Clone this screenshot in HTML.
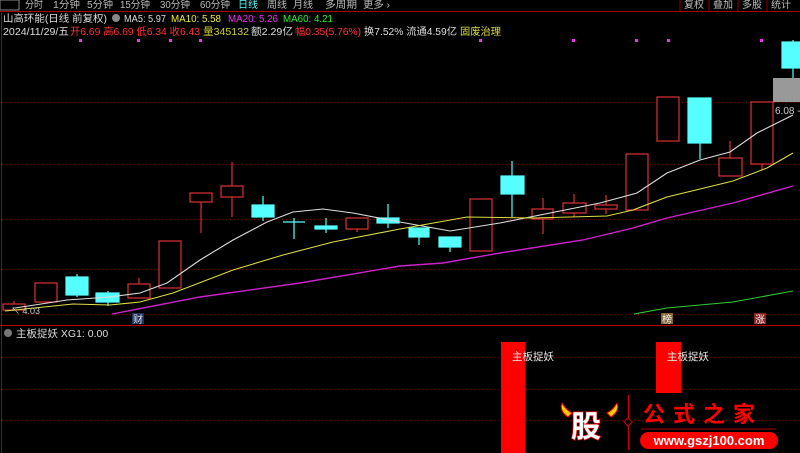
<!DOCTYPE html>
<html><head><meta charset="utf-8"><style>
html,body{margin:0;padding:0;background:#000;width:800px;height:453px;overflow:hidden}
svg{display:block}
text{font-family:"Liberation Sans","Noto Sans CJK SC",sans-serif}
</style></head><body>
<svg width="800" height="453" viewBox="0 0 800 453" xmlns="http://www.w3.org/2000/svg">
<rect width="800" height="453" fill="#000"/>
<!-- top bar -->
<rect x="0" y="0" width="19" height="10" fill="none" stroke="#888" stroke-width="1"/>
<g font-size="10" fill="#bbb" lengthAdjust="spacingAndGlyphs">
<text x="25" y="8" textLength="18" lengthAdjust="spacingAndGlyphs">分时</text>
<text x="53" y="8" textLength="27" lengthAdjust="spacingAndGlyphs">1分钟</text>
<text x="87" y="8" textLength="26" lengthAdjust="spacingAndGlyphs">5分钟</text>
<text x="120" y="8" textLength="30" lengthAdjust="spacingAndGlyphs">15分钟</text>
<text x="160" y="8" textLength="30" lengthAdjust="spacingAndGlyphs">30分钟</text>
<text x="200" y="8" textLength="30" lengthAdjust="spacingAndGlyphs">60分钟</text>
<text x="238" y="8" fill="#5ff" textLength="20" lengthAdjust="spacingAndGlyphs">日线</text>
<text x="267" y="8" textLength="20" lengthAdjust="spacingAndGlyphs">周线</text>
<text x="293" y="8" textLength="20" lengthAdjust="spacingAndGlyphs">月线</text>
<text x="325" y="8" textLength="32" lengthAdjust="spacingAndGlyphs">多周期</text>
<text x="363" y="8" textLength="27" lengthAdjust="spacingAndGlyphs">更多 ›</text>
<text x="684" y="8">复权</text><text x="713" y="8">叠加</text><text x="742" y="8">多股</text><text x="771" y="8">统计</text>
</g>
<g stroke="#8b0000" stroke-width="1"><line x1="680" y1="0" x2="680" y2="11"/><line x1="709" y1="0" x2="709" y2="11"/><line x1="738" y1="0" x2="738" y2="11"/><line x1="767" y1="0" x2="767" y2="11"/></g>
<line x1="0" y1="11.5" x2="800" y2="11.5" stroke="#a00" stroke-width="1"/>
<line x1="1.5" y1="12" x2="1.5" y2="453" stroke="#a00" stroke-width="1"/>
<!-- header -->
<g font-size="10">
<text x="3" y="22" fill="#ddd" textLength="104" lengthAdjust="spacingAndGlyphs">山高环能(日线 前复权)</text>
<circle cx="116" cy="18" r="4" fill="#888"/>
<text x="124" y="22" fill="#ddd" textLength="42" lengthAdjust="spacingAndGlyphs">MA5: 5.97</text>
<text x="171" y="22" fill="#ee3" textLength="50" lengthAdjust="spacingAndGlyphs">MA10: 5.58</text>
<text x="228" y="22" fill="#e3e" textLength="50" lengthAdjust="spacingAndGlyphs">MA20: 5.26</text>
<text x="283" y="22" fill="#3e3" textLength="50" lengthAdjust="spacingAndGlyphs">MA60: 4.21</text>
<text x="3" y="35" fill="#ddd" textLength="66" lengthAdjust="spacingAndGlyphs">2024/11/29/五</text>
<text x="70" y="35" fill="#f33" textLength="130" lengthAdjust="spacingAndGlyphs">开6.69 高6.69 低6.34 收6.43</text>
<text x="203" y="35" fill="#cc3" textLength="46" lengthAdjust="spacingAndGlyphs">量345132</text>
<text x="251" y="35" fill="#ddd" textLength="42" lengthAdjust="spacingAndGlyphs">额2.29亿</text>
<text x="295" y="35" fill="#f33" textLength="66" lengthAdjust="spacingAndGlyphs">幅0.35(5.76%)</text>
<text x="364" y="35" fill="#ddd" textLength="93" lengthAdjust="spacingAndGlyphs">换7.52% 流通4.59亿</text>
<text x="460" y="35" fill="#dd4" textLength="41" lengthAdjust="spacingAndGlyphs">固废治理</text>
</g>
<!-- pink dots -->
<g fill="#e3e"><rect x="79" y="39" width="3" height="3"/><rect x="137" y="39" width="3" height="3"/><rect x="169" y="39" width="3" height="3"/><rect x="199" y="39" width="3" height="3"/><rect x="479" y="39" width="3" height="3"/><rect x="572" y="39" width="3" height="3"/><rect x="635" y="39" width="3" height="3"/><rect x="667" y="39" width="3" height="3"/><rect x="760" y="39" width="3" height="3"/></g>
<!-- grid -->
<g stroke="#700" stroke-width="1" stroke-dasharray="1,3">
<line x1="2" y1="102.5" x2="800" y2="102.5"/><line x1="2" y1="164.5" x2="800" y2="164.5"/><line x1="2" y1="219.5" x2="800" y2="219.5"/><line x1="2" y1="269.5" x2="800" y2="269.5"/><line x1="2" y1="314.5" x2="800" y2="314.5"/>
<line x1="2" y1="357.5" x2="800" y2="357.5"/><line x1="2" y1="389.5" x2="800" y2="389.5"/><line x1="2" y1="420.5" x2="800" y2="420.5"/>
</g>
<!-- candles red -->
<g stroke="#d33" stroke-width="1.2" fill="#000">
<line x1="14" y1="301" x2="14" y2="304"/><rect x="3" y="304" width="22" height="6"/>
<rect x="35" y="283" width="22" height="19"/>
<line x1="139" y1="278" x2="139" y2="284"/><rect x="128" y="284" width="22" height="14"/>
<rect x="159" y="241" width="22" height="47"/>
<line x1="201" y1="202" x2="201" y2="233"/><rect x="190" y="193" width="22" height="9"/>
<line x1="232" y1="162" x2="232" y2="217"/><rect x="221" y="186" width="22" height="11"/>
<line x1="357" y1="229" x2="357" y2="232"/><rect x="346" y="218" width="22" height="11"/>
<rect x="470" y="199" width="22" height="52"/>
<line x1="543" y1="198" x2="543" y2="234"/><rect x="532" y="209" width="21" height="10"/>
<line x1="574" y1="194" x2="574" y2="217"/><rect x="563" y="203" width="23" height="10"/>
<line x1="606" y1="195" x2="606" y2="214"/><rect x="595" y="205" width="22" height="4"/>
<rect x="626" y="154" width="22" height="56"/>
<rect x="657" y="97" width="22" height="44"/>
<line x1="730" y1="141" x2="730" y2="158"/><rect x="719" y="158" width="23" height="18"/>
<line x1="762" y1="164" x2="762" y2="170"/><rect x="751" y="102" width="22" height="62"/>
</g>
<!-- candles cyan -->
<g stroke="#5ff" stroke-width="1.2" fill="#5ff">
<line x1="77" y1="274" x2="77" y2="297"/><rect x="66" y="277" width="22" height="18"/>
<line x1="108" y1="291" x2="108" y2="306"/><rect x="96" y="293" width="23" height="9"/>
<line x1="263" y1="196" x2="263" y2="221"/><rect x="252" y="205" width="22" height="12"/>
<line x1="294" y1="218" x2="294" y2="239"/><line x1="283" y1="222" x2="305" y2="222"/>
<line x1="326" y1="218" x2="326" y2="233"/><rect x="315" y="226" width="22" height="3"/>
<line x1="388" y1="204" x2="388" y2="228"/><rect x="377" y="218" width="22" height="5"/>
<line x1="419" y1="228" x2="419" y2="245"/><rect x="409" y="228" width="20" height="9"/>
<line x1="450" y1="237" x2="450" y2="252"/><rect x="439" y="237" width="22" height="10"/>
<line x1="512" y1="161" x2="512" y2="217"/><rect x="501" y="176" width="23" height="18"/>
<line x1="700" y1="98" x2="700" y2="159"/><rect x="688" y="98" width="23" height="45"/>
<line x1="793" y1="40" x2="793" y2="78"/><rect x="782" y="42" width="18" height="26"/>
</g>
<rect x="773" y="78" width="27" height="24" fill="#999"/>
<text x="775" y="114" font-size="10" fill="#ccc">6.08 -</text>
<!-- MAs -->
<g fill="none" stroke-width="1.1">
<polyline stroke="#ddd" points="15,308 67,300 110,297 140,293 167,283 200,260 233,240 267,222 293,212 323,209 353,213 400,222 450,231 500,223 600,203 637,193 667,173 700,160 730,152 757,133 793,115"/>
<polyline stroke="#dd4" points="5,311 15,310 73,304 110,305 140,302 173,293 233,270 283,255 333,242 400,229 467,217 533,218 607,216 633,210 667,197 733,181 767,168 793,153"/>
<polyline stroke="#c2c" stroke-width="1.4" points="112,314 200,297 300,283 400,266 443,263 500,253 583,240 633,228 667,218 733,203 793,186"/>
<polyline stroke="#3c3" points="634,314 667,308 733,302 793,291"/>
</g>
<text x="11" y="314" font-size="9" fill="#ccc">↖ 4.03</text>
<rect x="132" y="313" width="12" height="11" fill="#236"/><text x="133" y="323" font-size="10" fill="#ddd">财</text>
<rect x="661" y="313" width="12" height="11" fill="#863"/><text x="662" y="323" font-size="10" fill="#eee">榜</text>
<rect x="754" y="313" width="12" height="11" fill="#822"/><text x="755" y="323" font-size="10" fill="#eee">涨</text>
<!-- panel divider -->
<line x1="0" y1="325.5" x2="800" y2="325.5" stroke="#b00" stroke-width="1"/>
<circle cx="8" cy="333" r="4" fill="#777"/>
<text x="16" y="337" font-size="10.5" fill="#ddd">主板捉妖 XG1: 0.00</text>
<!-- bars -->
<rect x="501" y="342" width="24" height="111" fill="#f00"/>
<rect x="656" y="342" width="25" height="51" fill="#f00"/>
<text x="512" y="360" font-size="10.5" fill="#eee">主板捉妖</text>
<text x="667" y="360" font-size="10.5" fill="#eee">主板捉妖</text>
<!-- logo -->
<path d="M562 403 q-3 8 6 14 l4 -4 q-6 -3 -10 -10z" fill="#fc0" stroke="#e00" stroke-width="1"/>
<path d="M617 403 q3 8 -6 14 l-4 -4 q6 -3 10 -10z" fill="#fc0" stroke="#e00" stroke-width="1"/>
<text x="571" y="437" font-size="30" font-weight="bold" fill="#fff" stroke="#e00" stroke-width="1.5" paint-order="stroke" font-family="'Noto Sans CJK SC',sans-serif">股</text>
<line x1="628.5" y1="395" x2="628.5" y2="450" stroke="#c00"/>
<rect x="625" y="419" width="6" height="6" fill="#000" stroke="#c00" transform="rotate(45 628 422)"/>
<text x="643" y="422" font-size="22" font-weight="bold" fill="#f00" letter-spacing="8" font-family="'Noto Serif CJK SC',serif">公式之家</text>
<line x1="641" y1="429" x2="776" y2="429" stroke="#800" stroke-width="1.2"/>
<rect x="640" y="432" width="138" height="17" rx="8.5" fill="#f00"/>
<text x="709" y="445" font-size="13" font-weight="bold" fill="#fff" text-anchor="middle">www.gszj100.com</text>
</svg>
</body></html>
